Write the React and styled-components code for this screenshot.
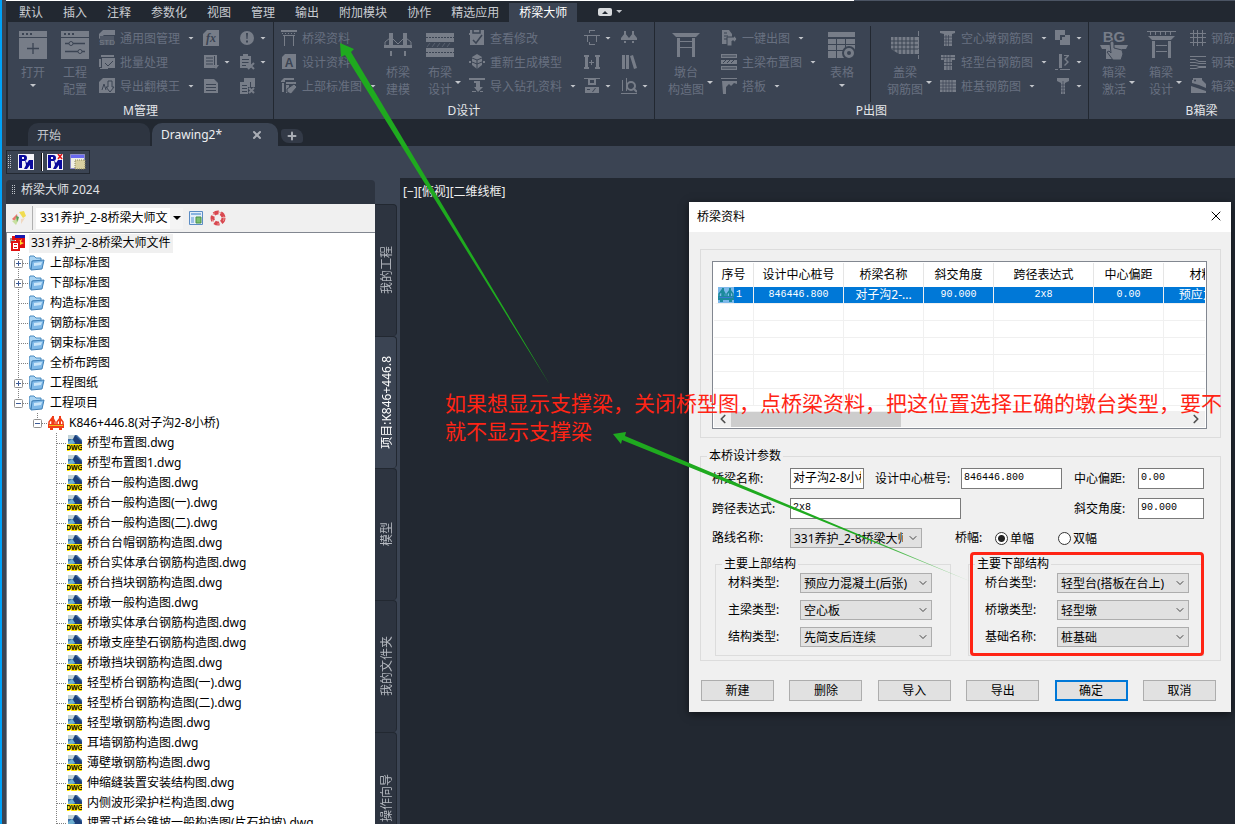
import React from 'react';
import styled, { createGlobalStyle } from 'styled-components';
import { ChevronDown, ChevronLeft, ChevronRight, X, Plus } from 'lucide-react';

const menus = ['默认', '插入', '注释', '参数化', '视图', '管理', '输出', '附加模块', '协作', '精选应用', '桥梁大师'];

const sideTabs = ['我的工程', '项目:K846+446.8', '模型', '我的文件夹', '操作向导'];

const folders = [
  { name: '上部标准图', box: 'plus' },
  { name: '下部标准图', box: 'plus' },
  { name: '构造标准图' },
  { name: '钢筋标准图' },
  { name: '钢束标准图' },
  { name: '全桥布跨图' },
  { name: '工程图纸', box: 'plus' },
  { name: '工程项目', box: 'minus', last: true },
];

const drawings = [
  '桥型布置图.dwg',
  '桥型布置图1.dwg',
  '桥台一般构造图.dwg',
  '桥台一般构造图(一).dwg',
  '桥台一般构造图(二).dwg',
  '桥台台帽钢筋构造图.dwg',
  '桥台实体承台钢筋构造图.dwg',
  '桥台挡块钢筋构造图.dwg',
  '桥墩一般构造图.dwg',
  '桥墩实体承台钢筋构造图.dwg',
  '桥墩支座垫石钢筋构造图.dwg',
  '桥墩挡块钢筋构造图.dwg',
  '轻型桥台钢筋构造图(一).dwg',
  '轻型桥台钢筋构造图(二).dwg',
  '轻型墩钢筋构造图.dwg',
  '耳墙钢筋构造图.dwg',
  '薄壁墩钢筋构造图.dwg',
  '伸缩缝装置安装结构图.dwg',
  '内侧波形梁护栏构造图.dwg',
  '埋置式桥台锥坡一般构造图(片石护坡).dwg',
];

const columns = [
  { title: '序号', width: 40, value: '1', number: true },
  { title: '设计中心桩号', width: 90, value: '846446.800', number: true },
  { title: '桥梁名称', width: 80, value: '对子沟2-...' },
  { title: '斜交角度', width: 70, value: '90.000', number: true },
  { title: '跨径表达式', width: 100, value: '2x8', number: true },
  { title: '中心偏距', width: 70, value: '0.00', number: true },
  { title: '材料类型', width: 100, value: '预应力混凝...' },
];

// 28px ribbon drawings
const bigIcons = {
  open: (
    <>
      <path d="M0 0h28v6H0zM0 7h28v21H0z" />
      <path d="M3 2h2v2H3zM7 2h2v2H7zM11 2h2v2h-2z" fill="#3b4453" />
      <path d="M14 12v11M8 17.500h12" stroke="#3b4453" strokeWidth="1.300" />
    </>
  ),
  config: (
    <>
      <path d="M0 0h28v6H0zM0 7h28v21H0z" />
      <path d="M3 2h2v2H3zM7 2h2v2H7zM11 2h2v2h-2z" fill="#3b4453" />
      <path d="M4 12.500h20M4 20.500h20" stroke="#3b4453" strokeWidth="1.300" />
      <circle cx="10" cy="12.500" r="2" fill="#7c828d" stroke="#3b4453" />
      <circle cx="19" cy="20.500" r="2" fill="#7c828d" stroke="#3b4453" />
    </>
  ),
  bridge: (
    <>
      <path d="M5 2h4v14H5zM19 2h4v14h-4zM0 14h28v3H0zM6 20h2v5H6zM20 20h2v5h-2z" />
      <path d="M1 15v-4l5-4M8 7l6 6 6-6M22 7l5 4v4" fill="none" stroke="currentColor" />
    </>
  ),
  beams: (
    <>
      <path d="M0 2h28v9H0zM0 17h28v9H0z" />
      <path d="M0 6.500h28M0 21.500h28" stroke="#3b4453" strokeDasharray="2 1" />
      <path d="M1 16l3-4M6 16l3-4M11 16l3-4M16 16l3-4M21 16l3-4" stroke="#596170" />
    </>
  ),
  pier: <path d="M0 2h28l-4 4H4zM5 7h3v19H5zM20 7h3v19h-3zM8 10h12v1H8zM8 16h12v1H8z" />,
  sheet: (
    <>
      <path d="M0 1h27v5H0zM0 8h8v5H0zM9 8h8v5H9zM18 8h9v5h-9zM0 14h8v5H0zM9 14h8v5H9zM18 14h9v5h-9zM0 20h8v7H0zM9 20h8v7H9z" />
      <circle cx="21" cy="22" r="7" fill="#3b4453" />
      <circle cx="21" cy="22" r="3.500" fill="none" stroke="currentColor" strokeWidth="3" />
    </>
  ),
  cap: (
    <>
      <path d="M0 6h28v17H8L0 18z" />
      <path d="M3 6v14M7 6v17M11 6v17M15 6v17M19 6v17M23 6v17M0 10h28M0 14h28M0 18h28" stroke="#3b4453" />
      <path d="M27.500 0v28" stroke="currentColor" strokeDasharray="5 1" />
    </>
  ),
  activate: (
    <>
      <text x="14" y="11" fontSize="15" fontWeight="bold" textAnchor="middle" fontFamily="Liberation Sans, sans-serif">BG</text>
      <path d="M0 14h28l-2 4h-4v10H6V18H2z" />
      <path d="M10 12a1.500 1.500 0 0 1 4 0v5l8 2 1 4-2 6h-8l-6-8 2-1 2 2z" stroke="#3b4453" strokeWidth="1" />
    </>
  ),
  box: <path d="M0 0h29v1H0zM3 1h1v3H3zM8 1h1v3H8zM13 1h1v3h-1zM18 1h1v3h-1zM23 1h1v3h-1zM1 5h27l-4 4H5zM5 10h3v17H5zM21 10h3v17h-3zM9 14h11v1H9zM9 20h11v1H9z" />,
};

// 16px ribbon drawings
const smallIcons = {
  std: (
    <>
      <path d="M0 4l4-4h12v5H5L0 9z" />
      <path d="M1 6h14v9H1z" fill="#515967" />
      <text x="8" y="15" fontSize="8" textAnchor="middle" fontFamily="Liberation Sans, sans-serif">STD</text>
    </>
  ),
  batch: (
    <>
      <path d="M2 1h13v2H2zM0 5h2v8H0zM3 4h13v10H3zM1 14h8v1H1z" />
      <path d="M6 9l3 3 5-5" fill="none" stroke="#3b4453" />
    </>
  ),
  exportDown: (
    <>
      <path d="M4 0h12v15H0V4z" />
      <path d="M9 3h4v6h2l-4 5-4-5h2zM3 12l2-6 2 6" fill="#7c828d" stroke="#3b4453" />
    </>
  ),
  fx: (
    <>
      <path d="M4 0h12v16H0V4z" />
      <text x="8" y="12" fontSize="12" fontStyle="italic" fontWeight="bold" textAnchor="middle" fill="#3b4453" fontFamily="Liberation Serif, serif">fx</text>
    </>
  ),
  listDoc: (
    <>
      <path d="M1 1h13v13H1z" />
      <path d="M3 4h7M3 7h7M3 10h7M11.500 2v11" stroke="#3b4453" />
      <path d="M10 11h6l-3 4z" />
    </>
  ),
  page: (
    <>
      <path d="M1 1h10l4 4v10H1z" />
      <path d="M3 6.500h10M3 9.500h10M3 12.500h10" stroke="#3b4453" />
    </>
  ),
  alert: (
    <>
      <circle cx="8" cy="8" r="7" />
      <path d="M7 3h2l-.5 6h-1zM7 10.500h2v2H7z" fill="#3b4453" />
    </>
  ),
  clipX: (
    <>
      <path d="M1 2h3V0h5v2h3v12H1z" />
      <path d="M3 5.500h7M3 8.500h7M3 11.500h4" stroke="#3b4453" />
      <path d="M9 9l6 6M15 9l-6 6" stroke="currentColor" strokeWidth="2" />
    </>
  ),
  docsX: (
    <>
      <path d="M5 0h11v9h-4V4H5zM1 4h10v12H1z" />
      <path d="M3 7.500h5M3 10.500h5M3 13.500h5" stroke="#3b4453" />
      <path d="M9 9h7v7H9z" fill="#3b4453" />
      <path d="M10 10l5 5M15 10l-5 5" stroke="currentColor" strokeWidth="2" />
    </>
  ),
  frame: <path d="M0 0h16v2H0zM1 3h1v1H1zM4 3h1v1H4zM7 3h1v1H7zM10 3h1v1h-1zM13 3h1v1h-1zM2 5h12v1H2zM3 6h1v10H3zM12 6h1v10h-1z" />,
  docA: (
    <>
      <path d="M4 0h11v15H1V3z" />
      <text x="8" y="13" fontSize="12" fontWeight="bold" textAnchor="middle" fill="#3b4453" fontFamily="Liberation Sans, sans-serif">A</text>
    </>
  ),
  stdEdit: (
    <>
      <path d="M0 3l3-3h10v2H4v2H0zM1 5h2v9H1zM5 4h10v2H5zM5 7h3v8H5z" />
      <path d="M6 11l7-5 3 3-6 7-4-2z" stroke="#3b4453" />
    </>
  ),
  edit: (
    <>
      <path d="M1 0h14v15H1V5H0V3h1z" />
      <path d="M4 0v3h7V0M4 10l3 3 6-8" fill="none" stroke="#3b4453" strokeWidth="1.500" />
    </>
  ),
  rebuild: (
    <>
      <path d="M8 0l5 3v8l-5 4-5-4V3zM0 7h2v2H0zM14 7h2v2h-2z" />
      <path d="M3 4l5 2 5-2M8 6v9M3 8l5 2 5-2" fill="none" stroke="#3b4453" />
    </>
  ),
  drill: <path d="M0 0h16v2H0zM5 3h6v6h3l-5 5-4-5h2V5H5zM3 13h4v1H3zM11 13h3v1h-3z" />,
  section: <path d="M5 0h6v1H6v2H5zM0 5h16v1h-3v6h-1V6H4v6H3V6H0zM5 12h1v2h5v1H5z" />,
  join: <path d="M0 1h5v2H4v10h1v2H0v-2h1V3H0zM11 1h5v2h-1v10h1v2h-5v-2h1V3h-1zM7 6h1v2h2v1H8v2H7V9H5V8h2z" />,
  calc: <path d="M0 0h16v1h-4v6H4V1H0zM6 2v3h4V2zM1 9h14v6H1zM3 11v1h3v-1zM8 14l3-4h1l-3 4z" fillRule="evenodd" />,
  piers: <path d="M3 1h2v6H3zM11 1h2v6h-2zM0 8l4-5 4 5 4-5 4 5v2H0zM3 11h2v2H3zM11 11h2v2h-2z" />,
  books: <path d="M1 1h3v14H1zM5 1h3v14H5zM9 2l3-1 4 13-3 1z" />,
  inspect: (
    <>
      <path d="M0 15h16v1H0zM1 2h1v11H1zM5 0h1v13H5z" />
      <circle cx="10" cy="8" r="4" fill="none" stroke="currentColor" strokeWidth="2" />
      <path d="M12 10l4 4" stroke="currentColor" strokeWidth="2" />
    </>
  ),
  oneKey: (
    <>
      <path d="M1 0h7l3 4v3H8v7H1z" />
      <path d="M3 3h3M3 6h4M3 9h4" stroke="#3b4453" />
      <path d="M6 7h7V5l3 4-3 4v-2h-2v5H6z" stroke="#3b4453" />
    </>
  ),
  beamPlan: (
    <>
      <path d="M0 0h16v4H0zM0 6h16v4H0zM0 12h16v4H0z" />
      <path d="M2 9l3-3M6 9l3-3M10 9l3-3M1 2h14M1 14h14" stroke="#3b4453" />
    </>
  ),
  slab: <path d="M0 0h16v1H0zM1 3h15v3l-3-1-3 3-2-2-3 3v7H2z" />,
  rebarPier: (
    <>
      <path d="M0 1h15v2l-3 1v12H4V4L0 3z" />
      <path d="M6 5v11M8.500 5v11M4 7h8M4 10h8M4 13h8" stroke="#3b4453" strokeWidth=".7" />
    </>
  ),
  rebarT: (
    <>
      <path d="M1 1h14v5H1zM4 6h8v10H4z" />
      <path d="M4 1v5M7 1v15M10 1v15M1 3.500h14M4 8.500h8M4 11.500h8" stroke="#3b4453" strokeWidth=".7" />
    </>
  ),
  rebarPile: (
    <>
      <path d="M0 2h16v12H0z" />
      <path d="M3 2v12M6 2v12M9 2v12M12 2v12M0 5h16M0 8h16M0 11h16" stroke="#3b4453" strokeWidth=".7" />
    </>
  ),
  overlap: (
    <>
      <path d="M0 0h10v10H0zM5 5h10v10H5z" />
      <path d="M5 5h5v5H5z" fill="#3b4453" />
      <path d="M7 7h3v3H7z" />
    </>
  ),
  curve: <path d="M4 0h3v14H4zM9 1h5v1L11 5l3 3-4 4-1-1 3-3-3-3 3-3H9zM0 15h3v1H0zM5 15h10v1H5z" />,
  column: (
    <>
      <path d="M2 0h12v3l-4 2v11H6V5L2 3z" />
      <path d="M8 3v13M6 7h4M6 10h4M6 13h4" stroke="#3b4453" strokeWidth=".7" />
    </>
  ),
  grid: <path d="M3 0h1v16H3zM7 0h1v16H7zM12 0h1v16h-1zM0 3h16v1H0zM0 7h16v1H0zM0 12h16v1H0z" />,
  strands: <path d="M0 2.500h16M0 5.500h5l4 2h7M0 8.500h5l4 1h7M0 11.500h6l3 1h7M0 14.500h6l3-1h7" fill="none" stroke="currentColor" />,
  picture: (
    <>
      <path d="M3 0h9v2l4 4v4L9 7 2 5V2h1zM1 8l15 5v2H1z" />
      <circle cx="5" cy="2.500" r="1" fill="#3b4453" />
    </>
  ),
};

const ribbonColumn = (items) => items.map(([icon, text, caret]) => ({ icon, text, caret }));

const panels = [
  {
    title: 'M管理',
    width: 265,
    parts: [
      { big: 'open', lines: ['打开'], caret: 'under' },
      { big: 'config', lines: ['工程', '配置'] },
      { width: 104, items: ribbonColumn([['std', '通用图管理', true], ['batch', '批量处理'], ['exportDown', '导出翻模王', true]]) },
      { width: 36, items: ribbonColumn([['fx', ''], ['listDoc', '', true], ['page', '']]) },
      { width: 36, items: ribbonColumn([['alert', '', true], ['clipX', '', true], ['docsX', '']]) },
    ],
  },
  {
    title: 'D设计',
    width: 380,
    parts: [
      { width: 99, items: ribbonColumn([['frame', '桥梁资料'], ['docA', '设计资料'], ['stdEdit', '上部标准图', true]]) },
      { big: 'bridge', lines: ['桥梁', '建模'] },
      { big: 'beams', lines: ['布梁', '设计'], caret: 'side' },
      { width: 115, items: ribbonColumn([['edit', '查看修改'], ['rebuild', '重新生成模型'], ['drill', '导入钻孔资料', true]]) },
      { width: 37, items: ribbonColumn([['section', '', true], ['join', ''], ['calc', '', true]]) },
      { width: 36, items: ribbonColumn([['piers', ''], ['books', ''], ['inspect', '', true]]) },
    ],
  },
  {
    title: 'P出图',
    width: 433,
    parts: [
      { big: 'pier', lines: ['墩台', '构造图'], wide: true, caret: 'side' },
      { width: 103, items: ribbonColumn([['oneKey', '一键出图', true], ['beamPlan', '主梁布置图', true], ['slab', '搭板', true]]) },
      { big: 'sheet', lines: ['表格'], caret: 'under' },
      { divider: true },
      { big: 'cap', lines: ['盖梁', '钢筋图'], wide: true, caret: 'side' },
      { width: 115, items: ribbonColumn([['rebarPier', '空心墩钢筋图', true], ['rebarT', '轻型台钢筋图', true], ['rebarPile', '桩基钢筋图', true]]) },
      { width: 36, items: ribbonColumn([['overlap', '', true], ['curve', '', true], ['column', '', true]]) },
    ],
  },
  {
    title: 'B箱梁',
    width: 225,
    parts: [
      { big: 'activate', lines: ['箱梁', '激活'], caret: 'side' },
      { big: 'box', lines: ['箱梁', '设计'], caret: 'side' },
      { width: 104, items: ribbonColumn([['grid', '钢筋构造'], ['strands', '钢束构造'], ['picture', '箱梁图纸']]) },
    ],
  },
];

const RibbonPart = ({ part }) => {
  if (part.divider) return <PartDivider />;
  if (part.big) {
    return (
      <BigButton type="button" $wide={part.wide} $side={part.caret === 'side'}>
        <svg width="28" height="28" fill="currentColor">{bigIcons[part.big]}</svg>
        <BigText>
          {part.lines.map((line) => (
            <span key={line}>{line}</span>
          ))}
        </BigText>
        {part.caret === 'under' && <Caret />}
        {part.caret === 'side' && <SideCaret />}
      </BigButton>
    );
  }
  return (
    <SmallColumn $width={part.width}>
      {part.items.map((item) => (
        <SmallButton key={item.icon} type="button" aria-label={item.text || item.icon}>
          <svg width="16" height="16" fill="currentColor">{smallIcons[item.icon]}</svg>
          {item.text && <SmallText>{item.text}</SmallText>}
          {item.caret && <Caret />}
        </SmallButton>
      ))}
    </SmallColumn>
  );
};

// one 19px cell of the dotted tree guides
const Guide = ({ box, last, blank }) => (
  <svg width="19" height="20">
    {!blank && (
      <g stroke="#808080" strokeDasharray="1 1">
        <path d={last ? 'M9.500 0v10' : 'M9.500 0v20'} />
        <path d="M10 10.500h9" />
      </g>
    )}
    {box && (
      <>
        <rect x="5.500" y="6.500" width="8" height="8" rx="1" fill="#fff" stroke="#919191" />
        <path d={box === 'plus' ? 'M7 10.500h5M9.500 8v5' : 'M7 10.500h5'} stroke="#3c5a96" />
      </>
    )}
  </svg>
);

const FolderIcon = () => (
  <svg width="16" height="16">
    <path d="M0 3l1-2h4l2 2h5v3H4l-2 8H1z" fill="#a9d3f2" stroke="#4b8cc0" />
    <path d="M3 6l12-1-2 9-11 1z" fill="#7fb9e8" stroke="#3f7fb5" />
    <path d="M5 8l8-1-1 3-7 1z" fill="#c9e6fa" />
  </svg>
);

const DwgIcon = () => (
  <svg width="15" height="16">
    <path d="M1 0h9l5 5v6H1z" fill="#3e6ea8" />
    <path d="M1 0h7v4H1z" fill="#c4d4d8" />
    <path d="M8 0l7 7v4H9L6 4z" fill="#1d3f78" />
    <path d="M1 7l4-3 3 4-7 3z" fill="#6fb0d0" />
    <text x="7.500" y="15" fontSize="7" fontWeight="bold" textAnchor="middle" stroke="#ffe400" strokeWidth="2" paintOrder="stroke" fontFamily="Liberation Sans, sans-serif">DWG</text>
  </svg>
);

const BridgeIcon = ({ color, deck }) => (
  <svg width="16" height="16">
    <path d="M1 10V7l3-4v7M7 10V7L5 3M9 10V7l3-4v7M15 10V7l-3-4" fill="none" stroke={color} strokeWidth="1.500" />
    <path d="M4 1h2v10H4zM11 1h2v10h-2z" fill={color} />
    <path d="M0 9h16v4H0z" fill={color} />
    <path d="M1 10h14v1H1z" fill={deck} />
    <path d="M2 13h3v2H2zM11 13h3v2h-3z" fill={color} />
  </svg>
);

const RootIcon = () => (
  <svg width="16" height="16">
    <path d="M0 3h5v5H0z" fill="#9a9a9a" />
    <path d="M2 1h13v4H2z" fill="#e01010" />
    <path d="M5 0h10v3H5z" fill="#1818b0" />
    <path d="M6 4h9v9H6z" fill="#e01010" />
    <path d="M8 3l1 3 3-2-1 3 3 1-4 2z" fill="#ffe030" />
    <path d="M2 7h7v8H2z" fill="#fff" stroke="#e01010" strokeWidth="2" />
    <path d="M4 9.500h3M4 12.500h3" stroke="#e01010" />
  </svg>
);

const ProgramIcon = ({ closed }) => (
  <svg width="16" height="16">
    <path d="M0 0h16v16H0z" fill="#f4f4fa" />
    <path d="M1 1h5a3 3 0 0 1 0 6H4v7H1zM4 3v2h2V3zM7 6l2 3 2-3h4v9h-3v-4l-3 4H6l2-4z" fill="#0a0a9c" fillRule="evenodd" />
    {closed && <path d="M11 0l4 5M15 0l-4 5" stroke="#e81010" strokeWidth="1.500" />}
  </svg>
);

const WindowIcon = () => (
  <svg width="16" height="16">
    <path d="M.5.500h14v14H.5z" fill="#f0f0e4" stroke="#8d8dc8" />
    <path d="M1 1h13v3H1z" fill="#6a6af0" />
    <path d="M5 6h10v9H5z" fill="#d8d0a0" stroke="#8a865e" strokeDasharray="1 1" />
  </svg>
);

const Combo = ({ id, value, width }) => (
  <ComboWrap $width={width}>
    <ComboSelect id={id} defaultValue={value}>
      <option>{value}</option>
    </ComboSelect>
    <ChevronDown size={12} strokeWidth={2} />
  </ComboWrap>
);

const StructureGroup = ({ title, rows, indent }) => (
  <Group>
    <Legend>{title}</Legend>
    <StructureRows $indent={indent}>
      {rows.map(([label, value]) => (
        <FieldRow key={label}>
          <Label $width={72} htmlFor={label}>{label}:</Label>
          <Combo id={label} value={value} width={132} />
        </FieldRow>
      ))}
    </StructureRows>
  </Group>
);

const BridgeDialog = () => (
  <Dialog role="dialog" aria-label="桥梁资料">
    <DialogTitle>
      桥梁资料
      <CloseButton type="button" aria-label="关闭">
        <X size={16} strokeWidth={1.5} />
      </CloseButton>
    </DialogTitle>
    <DialogBody>
      <Group>
        <ListBody>
          <ListBox>
            <TableWrap>
              <BridgeTable>
                <thead>
                  <tr>
                    {columns.map((col) => (
                      <HeadCell key={col.title} $width={col.width}>{col.title}</HeadCell>
                    ))}
                  </tr>
                </thead>
                <tbody>
                  <SelectedRow>
                    {columns.map((col, index) => (
                      <Cell key={col.title} $number={col.number}>
                        {index === 0 ? (
                          <FirstCell>
                            <BridgeIcon color="#1c8a9c" deck="#3878d0" />
                            {col.value}
                          </FirstCell>
                        ) : (
                          col.value
                        )}
                      </Cell>
                    ))}
                  </SelectedRow>
                  {[1, 2, 3, 4, 5, 6].map((row) => (
                    <tr key={row}>
                      {columns.map((col) => (
                        <Cell key={col.title} />
                      ))}
                    </tr>
                  ))}
                </tbody>
              </BridgeTable>
            </TableWrap>
            <ScrollBar>
              <ChevronLeft size={14} strokeWidth={3} />
              <Thumb />
              <ChevronRight size={14} strokeWidth={3} />
            </ScrollBar>
          </ListBox>
        </ListBody>
      </Group>

      <ParamGroup>
        <Legend>本桥设计参数</Legend>
        <ParamBody>
          <FieldRow>
            <Label $width={78} htmlFor="name">桥梁名称:</Label>
            <TextBox id="name" $width={74} $cjk defaultValue="对子沟2-8小桥" />
            <Label $width={86} $gap={11} htmlFor="stake">设计中心桩号:</Label>
            <TextBox id="stake" $width={101} defaultValue="846446.800" />
            <Label $width={64} $gap={12} htmlFor="offset">中心偏距:</Label>
            <TextBox id="offset" $width={66} defaultValue="0.00" />
          </FieldRow>
          <FieldRow>
            <Label $width={78} htmlFor="span">跨径表达式:</Label>
            <TextBox id="span" $width={171} defaultValue="2x8" />
            <Label $width={64} $push htmlFor="angle">斜交角度:</Label>
            <TextBox id="angle" $width={66} defaultValue="90.000" />
          </FieldRow>
          <FieldRow>
            <Label $width={78} htmlFor="route">路线名称:</Label>
            <Combo id="route" value="331养护_2-8桥梁大师文件" width={132} />
            <Label as="span" $width={40} $gap={33}>桥幅:</Label>
            <RadioLabel>
              <Radio name="width" defaultChecked />
              单幅
            </RadioLabel>
            <RadioLabel>
              <Radio name="width" />
              双幅
            </RadioLabel>
          </FieldRow>
          <Structures>
            <StructureGroup
              title="主要上部结构"
              indent={12}
              rows={[['材料类型', '预应力混凝土(后张)'], ['主梁类型', '空心板'], ['结构类型', '先简支后连续']]}
            />
            <Marked>
              <StructureGroup
                title="主要下部结构"
                indent={16}
                rows={[['桥台类型', '轻型台(搭板在台上)'], ['桥墩类型', '轻型墩'], ['基础名称', '桩基础']]}
              />
            </Marked>
          </Structures>
        </ParamBody>
      </ParamGroup>

      <Buttons>
        {['新建', '删除', '导入', '导出', '确定', '取消'].map((text) => (
          <PushButton key={text} type="button" $primary={text === '确定'}>{text}</PushButton>
        ))}
      </Buttons>
    </DialogBody>
  </Dialog>
);

const App = () => {
  return (
    <Window>
      <GlobalStyle />
      <TopEdge />
      <MenuBar>
        {menus.map((menu) => (
          <MenuTab key={menu} type="button" $active={menu === '桥梁大师'}>{menu}</MenuTab>
        ))}
        <MenuToggle type="button" aria-label="最小化功能区">
          <svg width="14" height="8">
            <rect width="14" height="8" rx="2" fill="#d8dadd" />
            <path d="M4 6l3-3 3 3z" fill="#222831" />
          </svg>
          <Caret />
        </MenuToggle>
      </MenuBar>
      <Ribbon>
        {panels.map((panel) => (
          <Panel key={panel.title} $width={panel.width}>
            <PanelBody>
              {panel.parts.map((part, index) => (
                <RibbonPart key={index} part={part} />
              ))}
            </PanelBody>
            <PanelTitle>{panel.title}</PanelTitle>
          </Panel>
        ))}
      </Ribbon>
      <DocTabs>
        <DocTab type="button">开始</DocTab>
        <DocTab type="button" $active>
          Drawing2*
          <X size={12} strokeWidth={4} color="#a9adb5" />
        </DocTab>
        <NewTab type="button" aria-label="新图形">
          <Plus size={12} strokeWidth={4} color="#a9adb5" />
        </NewTab>
      </DocTabs>
      <Main>
        <LeftDock>
          <ToolStrip>
            <Grip />
            <ProgramIcon />
            <StripDivider />
            <ProgramIcon closed />
            <WindowIcon />
          </ToolStrip>
          <PaletteRow>
            <Palette>
              <PaletteTitle>
                <Grip $small />
                桥梁大师 2024
              </PaletteTitle>
              <PaletteBar>
                <svg width="16" height="16">
                  <path d="M8 2l5-1 2 5-3 2z" fill="#f0dc50" />
                  <path d="M1 9l5-5 1 5-2 3z" fill="#e87870" />
                  <path d="M1 11l3-1 2-4 2 3-3 6z" fill="#c8e0a0" />
                  <path d="M5 6l3 1-2 5z" fill="#58a058" />
                  <path d="M10 9l4-1-4 6z" fill="#f0d8c0" />
                </svg>
                <BarDivider />
                <FileCombo>
                  <FileSelect aria-label="文件" defaultValue="331养护_2-8桥梁大师文件">
                    <option>331养护_2-8桥梁大师文件</option>
                  </FileSelect>
                  <svg width="8" height="5"><path d="M0 0h8L4 4z" /></svg>
                </FileCombo>
                <svg width="14" height="14">
                  <path d="M.5.500h13v13H.5z" fill="#e4eefa" stroke="#5b8cc4" />
                  <path d="M2 2h10v2H2z" fill="#8ab4e0" />
                  <path d="M2 6h3v6H2z" fill="#9cc0e8" />
                  <path d="M7 6h5v6H7z" fill="#7cc070" stroke="#4a9048" />
                </svg>
                <svg width="16" height="16" fill="none" stroke="#d84850" strokeWidth="4">
                  <circle cx="8" cy="8" r="5.500" strokeDasharray="5 2" />
                  <circle cx="8" cy="8" r="6" stroke="#f09a98" strokeWidth="1" strokeDasharray="3 4" />
                </svg>
              </PaletteBar>
              <Tree>
                <RootRow>
                  <RootIcon />
                  <RootText>331养护_2-8桥梁大师文件</RootText>
                </RootRow>
                {folders.map((folder) => (
                  <TreeRow key={folder.name}>
                    <Guide box={folder.box} last={folder.last} />
                    <FolderIcon />
                    <TreeText>{folder.name}</TreeText>
                  </TreeRow>
                ))}
                <TreeRow>
                  <Guide blank />
                  <Guide box="minus" last />
                  <BridgeIcon color="#f03c18" deck="#f0c020" />
                  <TreeText>K846+446.8(对子沟2-8小桥)</TreeText>
                </TreeRow>
                {drawings.map((name) => (
                  <TreeRow key={name}>
                    <Guide blank />
                    <Guide blank />
                    <Guide />
                    <DwgIcon />
                    <TreeText>{name}</TreeText>
                  </TreeRow>
                ))}
              </Tree>
            </Palette>
            <SideTabs>
              {sideTabs.map((tab, index) => (
                <SideTab key={tab} type="button" $active={index === 1}>
                  <SideText>{tab}</SideText>
                </SideTab>
              ))}
            </SideTabs>
          </PaletteRow>
        </LeftDock>
        <Canvas>
          <ViewLabel>[−][俯视][二维线框]</ViewLabel>
          <BridgeDialog />
        </Canvas>
      </Main>

      <Note>
        如果想显示支撑梁，关闭桥型图，点桥梁资料，把这位置选择正确的墩台类型，要不
        <br />
        就不显示支撑梁
      </Note>
      <Arrows>
        <path d="M340 43l1 14 4-2 205 330L351 52l3-3z" fill="#1faa1f" />
        <path d="M613 434l8 10 1-4 350 142L625 436l1-4z" fill="url(#fade)" />
        <defs>
          <linearGradient id="fade">
            <stop offset=".7" stopColor="#1faa1f" />
            <stop offset="1" stopColor="#1faa1f" stopOpacity=".3" />
          </linearGradient>
        </defs>
      </Arrows>
    </Window>
  );
};

const GlobalStyle = createGlobalStyle`
  * {
    box-sizing: border-box;
  }
  body {
    margin: 0;
    font-family: 'Noto Sans', 'Noto Sans CJK SC', sans-serif;
    font-size: 12px;
  }
  button, input, select {
    font: inherit;
    border-radius: 0;
    margin: 0;
  }
  button {
    border: 0;
    padding: 0;
    background: none;
    color: inherit;
  }
  svg {
    display: block;
    flex-shrink: 0;
  }
`;

const Window = styled.div`
  position: relative;
  display: flex;
  flex-direction: column;
  height: 100vh;
  overflow: hidden;
  padding-left: 4px;
  border-left: 2px solid #00a2f8;
  background: #3b4453;
  color: #d5d8dc;
`;
const TopEdge = styled.div`
  height: 1px;
  flex-shrink: 0;
  background: linear-gradient(90deg, #fff 69%, #4b5463 69%);
`;
const MenuBar = styled.nav`
  display: flex;
  flex-shrink: 0;
  height: 21px;
  padding-left: 3px;
  background: #222831;
`;
const MenuTab = styled.button`
  margin-top: 2px;
  padding: 0 10px;
  line-height: 19px;
  white-space: nowrap;
  color: ${({ $active }) => ($active ? '#fff' : '#c9ccd1')};
  background: ${({ $active }) => ($active ? '#3b4453' : 'none')};
`;
const MenuToggle = styled.button`
  display: flex;
  align-items: center;
  gap: 4px;
  padding-left: 21px;
`;
const Caret = styled.span`
  flex-shrink: 0;
  width: 6px;
  height: 3px;
  background: #c3c6cb;
  clip-path: polygon(0 0, 100% 0, 50% 100%);
`;
const Ribbon = styled.div`
  display: flex;
  flex-shrink: 0;
  border-left: 2px solid #222831;
  overflow: hidden;
`;
const Panel = styled.section`
  display: flex;
  flex-direction: column;
  flex-shrink: 0;
  box-sizing: content-box;
  width: ${({ $width }) => $width}px;
  border-right: 1px solid #222831;
`;
const PanelBody = styled.div`
  display: flex;
  height: 80px;
  padding: 4px 0 0 4px;
  color: #777d88;
`;
const PanelTitle = styled.div`
  line-height: 17px;
  text-align: center;
  color: #e4e6e9;
`;
const PartDivider = styled.div`
  width: 1px;
  margin: 0 7px;
  background: #222831;
`;
const BigButton = styled.button`
  position: relative;
  display: flex;
  flex-direction: column;
  align-items: center;
  flex-shrink: 0;
  width: ${({ $wide, $side }) => ($wide ? 54 : 42) + ($side ? 5 : 0)}px;
  padding: 5px ${({ $side }) => ($side ? 5 : 0)}px 0 0;

  svg {
    overflow: visible;
  }
`;
const BigText = styled.span`
  display: flex;
  flex-direction: column;
  margin: 5px 0 3px;
  line-height: 17px;
  white-space: nowrap;
  color: #687080;
`;
const SideCaret = styled(Caret)`
  position: absolute;
  right: 5px;
  bottom: 18px;
`;
const SmallColumn = styled.div`
  width: ${({ $width }) => $width}px;
  flex-shrink: 0;
  padding-left: 3px;
`;
const SmallButton = styled.button`
  display: flex;
  align-items: center;
  gap: 5px;
  height: 24px;
`;
const SmallText = styled.span`
  padding-right: 3px;
  white-space: nowrap;
  color: #687080;
`;
const DocTabs = styled.div`
  display: flex;
  align-items: flex-end;
  flex-shrink: 0;
  gap: 2px;
  height: 27px;
  padding-left: 22px;
  background: #222831;
`;
const DocTab = styled.button`
  display: flex;
  align-items: center;
  justify-content: space-between;
  width: ${({ $active }) => ($active ? 126 : 122)}px;
  height: 23px;
  padding: 0 15px 0 9px;
  border-radius: 10px 10px 0 0;
  color: ${({ $active }) => ($active ? '#eceef0' : '#c5c8cd')};
  background: ${({ $active }) => ($active ? '#3b4453' : '#2e3541')};
`;
const NewTab = styled.button`
  display: flex;
  align-items: center;
  justify-content: center;
  width: 22px;
  height: 14px;
  margin: 0 0 3px 1px;
  border-radius: 3px 8px 3px 8px;
  background: #333a47;
`;
const Main = styled.main`
  display: flex;
  flex: 1;
  min-height: 0;
`;
const LeftDock = styled.div`
  display: flex;
  flex-direction: column;
  flex-shrink: 0;
`;
const ToolStrip = styled.div`
  display: flex;
  align-items: center;
  align-self: flex-start;
  gap: 7px;
  height: 24px;
  margin: 4px 0 6px;
  padding: 0 3px 0 1px;
  border: 1px solid #222831;
`;
const Grip = styled.span`
  width: ${({ $small }) => ($small ? 4 : 3)}px;
  height: ${({ $small }) => ($small ? 9 : 14)}px;
  background: repeating-linear-gradient(#c0c4ca 0 1px, transparent 1px 2px);
  mask: repeating-linear-gradient(90deg, #000 0 1px, transparent 1px 2px);
`;
const StripDivider = styled.span`
  width: 2px;
  height: 18px;
  margin-right: -3px;
  border-right: 1px solid #fff;
  background: #111;
`;
const PaletteRow = styled.div`
  display: flex;
  flex: 1;
  min-height: 0;
`;
const Palette = styled.aside`
  display: flex;
  flex-direction: column;
  width: 369px;
  color: #000;
`;
const PaletteTitle = styled.div`
  display: flex;
  align-items: center;
  flex-shrink: 0;
  gap: 5px;
  height: 24px;
  padding: 0 6px 6px;
  border-radius: 4px 4px 0 0;
  background: #2d3440;
  color: #e0e2e5;
`;
const PaletteBar = styled.div`
  display: flex;
  align-items: center;
  flex-shrink: 0;
  gap: 7px;
  height: 28px;
  padding-left: 5px;
  background: #f0f0f0;
`;
const BarDivider = styled.span`
  width: 1px;
  height: 24px;
  margin: 0 -4px 0 -2px;
  background: #b0b0b0;
`;
const FileCombo = styled.div`
  display: grid;
  grid-template-columns: 134px 13px;
  align-items: center;
  height: 21px;
  margin-right: -1px;
  background: linear-gradient(90deg, #fff 134px, #f4f4f4 134px);

  svg {
    grid-area: 1 / 2;
    justify-self: center;
    pointer-events: none;
  }
`;
const FileSelect = styled.select`
  grid-area: 1 / 1 / 2 / 3;
  width: 147px;
  height: 21px;
  padding: 0 15px 2px 4px;
  border: 0;
  appearance: none;
  background: none;
  color: #000;
`;
const Tree = styled.ul`
  flex: 1;
  min-height: 0;
  margin: 0;
  padding: 0 0 0 2px;
  overflow: hidden;
  list-style: none;
  background: #fff;
  border: 1px solid #828790;
  border-width: 1px 0 0 1px;
`;
const TreeRow = styled.li`
  display: flex;
  align-items: center;
  height: 20px;
  white-space: nowrap;

  svg:last-of-type {
    margin: 0 5px 0 1px;
  }
`;
const TreeText = styled.span`
  padding-bottom: 2px;
`;
const RootRow = styled.li`
  display: flex;
  align-items: center;
  gap: 3px;
  height: 20px;
  padding-left: 1px;
`;
const RootText = styled.span`
  padding: 0 2px 2px;
  line-height: 17px;
  background: #f0f0f0;
`;
const SideTabs = styled.div`
  width: 25px;
  padding: 24px 3px 0 0;
  overflow: hidden;
`;
const SideTab = styled.button`
  display: flex;
  align-items: center;
  justify-content: center;
  width: 22px;
  height: 132px;
  border: 1px solid #222831;
  border-width: 1px 1px 0 0;
  border-radius: 0 4px 4px 0;
  color: ${({ $active }) => ($active ? '#fff' : '#b4b8bf')};
  background: ${({ $active }) => ($active ? '#3b4453' : '#2d3440')};
`;
const SideText = styled.span`
  writing-mode: vertical-rl;
  text-orientation: sideways;
  transform: rotate(180deg);
  white-space: nowrap;
`;
const Canvas = styled.section`
  position: relative;
  flex: 1;
  min-width: 0;
  margin-top: 32px;
  background: #222831;
`;
const ViewLabel = styled.div`
  padding: 6px 3px;
  line-height: 16px;
  color: #f0f0f0;
`;
const Dialog = styled.div`
  position: absolute;
  top: 24px;
  left: 289px;
  width: 542px;
  background: #f0f0f0;
  color: #000;
  box-shadow: 0 2px 8px rgba(0, 0, 0, 0.5);
`;
const DialogTitle = styled.header`
  display: flex;
  align-items: center;
  justify-content: space-between;
  height: 30px;
  padding: 0 7px 2px 8px;
  background: #fff;
`;
const CloseButton = styled.button`
  padding: 0;
`;
const DialogBody = styled.div`
  padding: 17px 10px 11px 11px;
`;
const Group = styled.fieldset`
  min-width: 0;
  margin: 0;
  padding: 0;
  border: 1px solid #dcdcdc;
`;
const ParamGroup = styled(Group)`
  margin-top: 11px;
`;
const Legend = styled.legend`
  margin-left: 6px;
  padding: 0 2px;
  line-height: 14px;
`;
const ListBody = styled.div`
  padding: 11px 13px 8px 11px;
`;
const ListBox = styled.div`
  display: flex;
  flex-direction: column;
  height: 168px;
  padding: 1px;
  border: 1px solid #828790;
  background: #fff;
`;
const TableWrap = styled.div`
  flex: 1;
  min-height: 0;
  overflow: hidden;
`;
const BridgeTable = styled.table`
  width: 550px;
  table-layout: fixed;
  border-spacing: 0;
`;
const HeadCell = styled.th`
  width: ${({ $width }) => $width}px;
  height: 24px;
  padding: 0;
  font-weight: normal;
  line-height: 16px;
  border-right: 1px solid #e5e5e5;
`;
const Cell = styled.td`
  height: 17px;
  padding: 0;
  line-height: 16px;
  text-align: center;
  white-space: nowrap;
  font-family: ${({ $number }) => ($number ? "'Liberation Mono', monospace" : 'inherit')};
  font-size: ${({ $number }) => ($number ? 10 : 12)}px;
  border: 1px solid #f0f0f0;
  border-width: 0 1px 1px 0;
`;
const SelectedRow = styled.tr`
  color: #fff;

  td {
    background: #0078d7;
  }
  td:first-child {
    border-left: 4px solid #fff;
  }
`;
const FirstCell = styled.span`
  display: flex;
  align-items: center;
  gap: 2px;

  svg {
    background: #7cb8ea;
  }
`;
const ScrollBar = styled.div`
  display: flex;
  align-items: center;
  height: 16px;
  padding: 0 2px;
  background: #f0f0f0;
  color: #505050;

  svg:last-child {
    margin-left: auto;
  }
`;
const Thumb = styled.div`
  width: 35%;
  height: 15px;
  margin-left: 1px;
  background: #cdcdcd;
`;
const ParamBody = styled.div`
  display: flex;
  flex-direction: column;
  gap: 9px;
  padding: 5px 16px 4px 11px;
`;
const FieldRow = styled.div`
  display: flex;
  align-items: center;
`;
const Label = styled.label`
  flex-shrink: 0;
  width: ${({ $width }) => $width}px;
  margin-left: ${({ $gap, $push }) => ($push ? 'auto' : `${$gap || 0}px`)};
  line-height: 16px;
  white-space: nowrap;
`;
const TextBox = styled.input`
  width: ${({ $width }) => $width}px;
  height: 21px;
  padding: 0 2px 3px;
  border: 1px solid #7a7a7a;
  background: #fff;
  color: #000;
  font-family: ${({ $cjk }) => ($cjk ? 'inherit' : "'Liberation Mono', monospace")};
  font-size: ${({ $cjk }) => ($cjk ? 12 : 10)}px;
`;
const ComboWrap = styled.div`
  display: grid;
  align-items: center;
  width: ${({ $width }) => $width}px;

  svg {
    grid-area: 1 / 1;
    justify-self: end;
    margin-right: 3px;
    color: #444;
    pointer-events: none;
  }
`;
const ComboSelect = styled.select`
  grid-area: 1 / 1;
  width: 100%;
  height: 20px;
  padding: 0 18px 0 3px;
  border: 1px solid #adadad;
  appearance: none;
  background: #e1e1e1;
  color: #000;
`;
const RadioLabel = styled.label`
  display: flex;
  align-items: center;
  gap: 2px;
  margin-right: 24px;
`;
const Radio = styled.input.attrs({ type: 'radio' })`
  width: 13px;
  height: 13px;
  appearance: none;
  border: 1px solid #333;
  border-radius: 50%;
  background: #fff;

  &:checked {
    background: radial-gradient(circle, #222 3px, #fff 4px);
  }
`;
const Structures = styled.div`
  display: flex;
  gap: 17px;
  margin-left: 3px;
`;
const StructureRows = styled.div`
  display: flex;
  flex-direction: column;
  gap: 7px;
  padding: 2px ${({ $indent }) => 30 - $indent}px 8px ${({ $indent }) => $indent}px;
`;
const Marked = styled.div`
  position: relative;

  &::after {
    content: '';
    position: absolute;
    inset: -5px 0 0 2px;
    border: 3px solid #ff2415;
    border-radius: 4px;
    pointer-events: none;
  }
`;
const Buttons = styled.div`
  display: flex;
  justify-content: space-between;
  margin: 19px 5px 0 1px;
`;
const PushButton = styled.button`
  width: 73px;
  height: 21px;
  border: ${({ $primary }) => ($primary ? '2px solid #0078d7' : '1px solid #adadad')};
  background: #e1e1e1;
  line-height: 16px;
`;
const Note = styled.p`
  position: absolute;
  top: 388px;
  left: 443px;
  margin: 0;
  font-family: 'Noto Sans CJK SC', sans-serif;
  font-size: 21px;
  line-height: 28px;
  white-space: nowrap;
  color: #ff2415;
`;
const Arrows = styled.svg`
  position: absolute;
  top: 0;
  left: -2px;
  width: 100%;
  height: 100%;
  pointer-events: none;
`;

export default App;
